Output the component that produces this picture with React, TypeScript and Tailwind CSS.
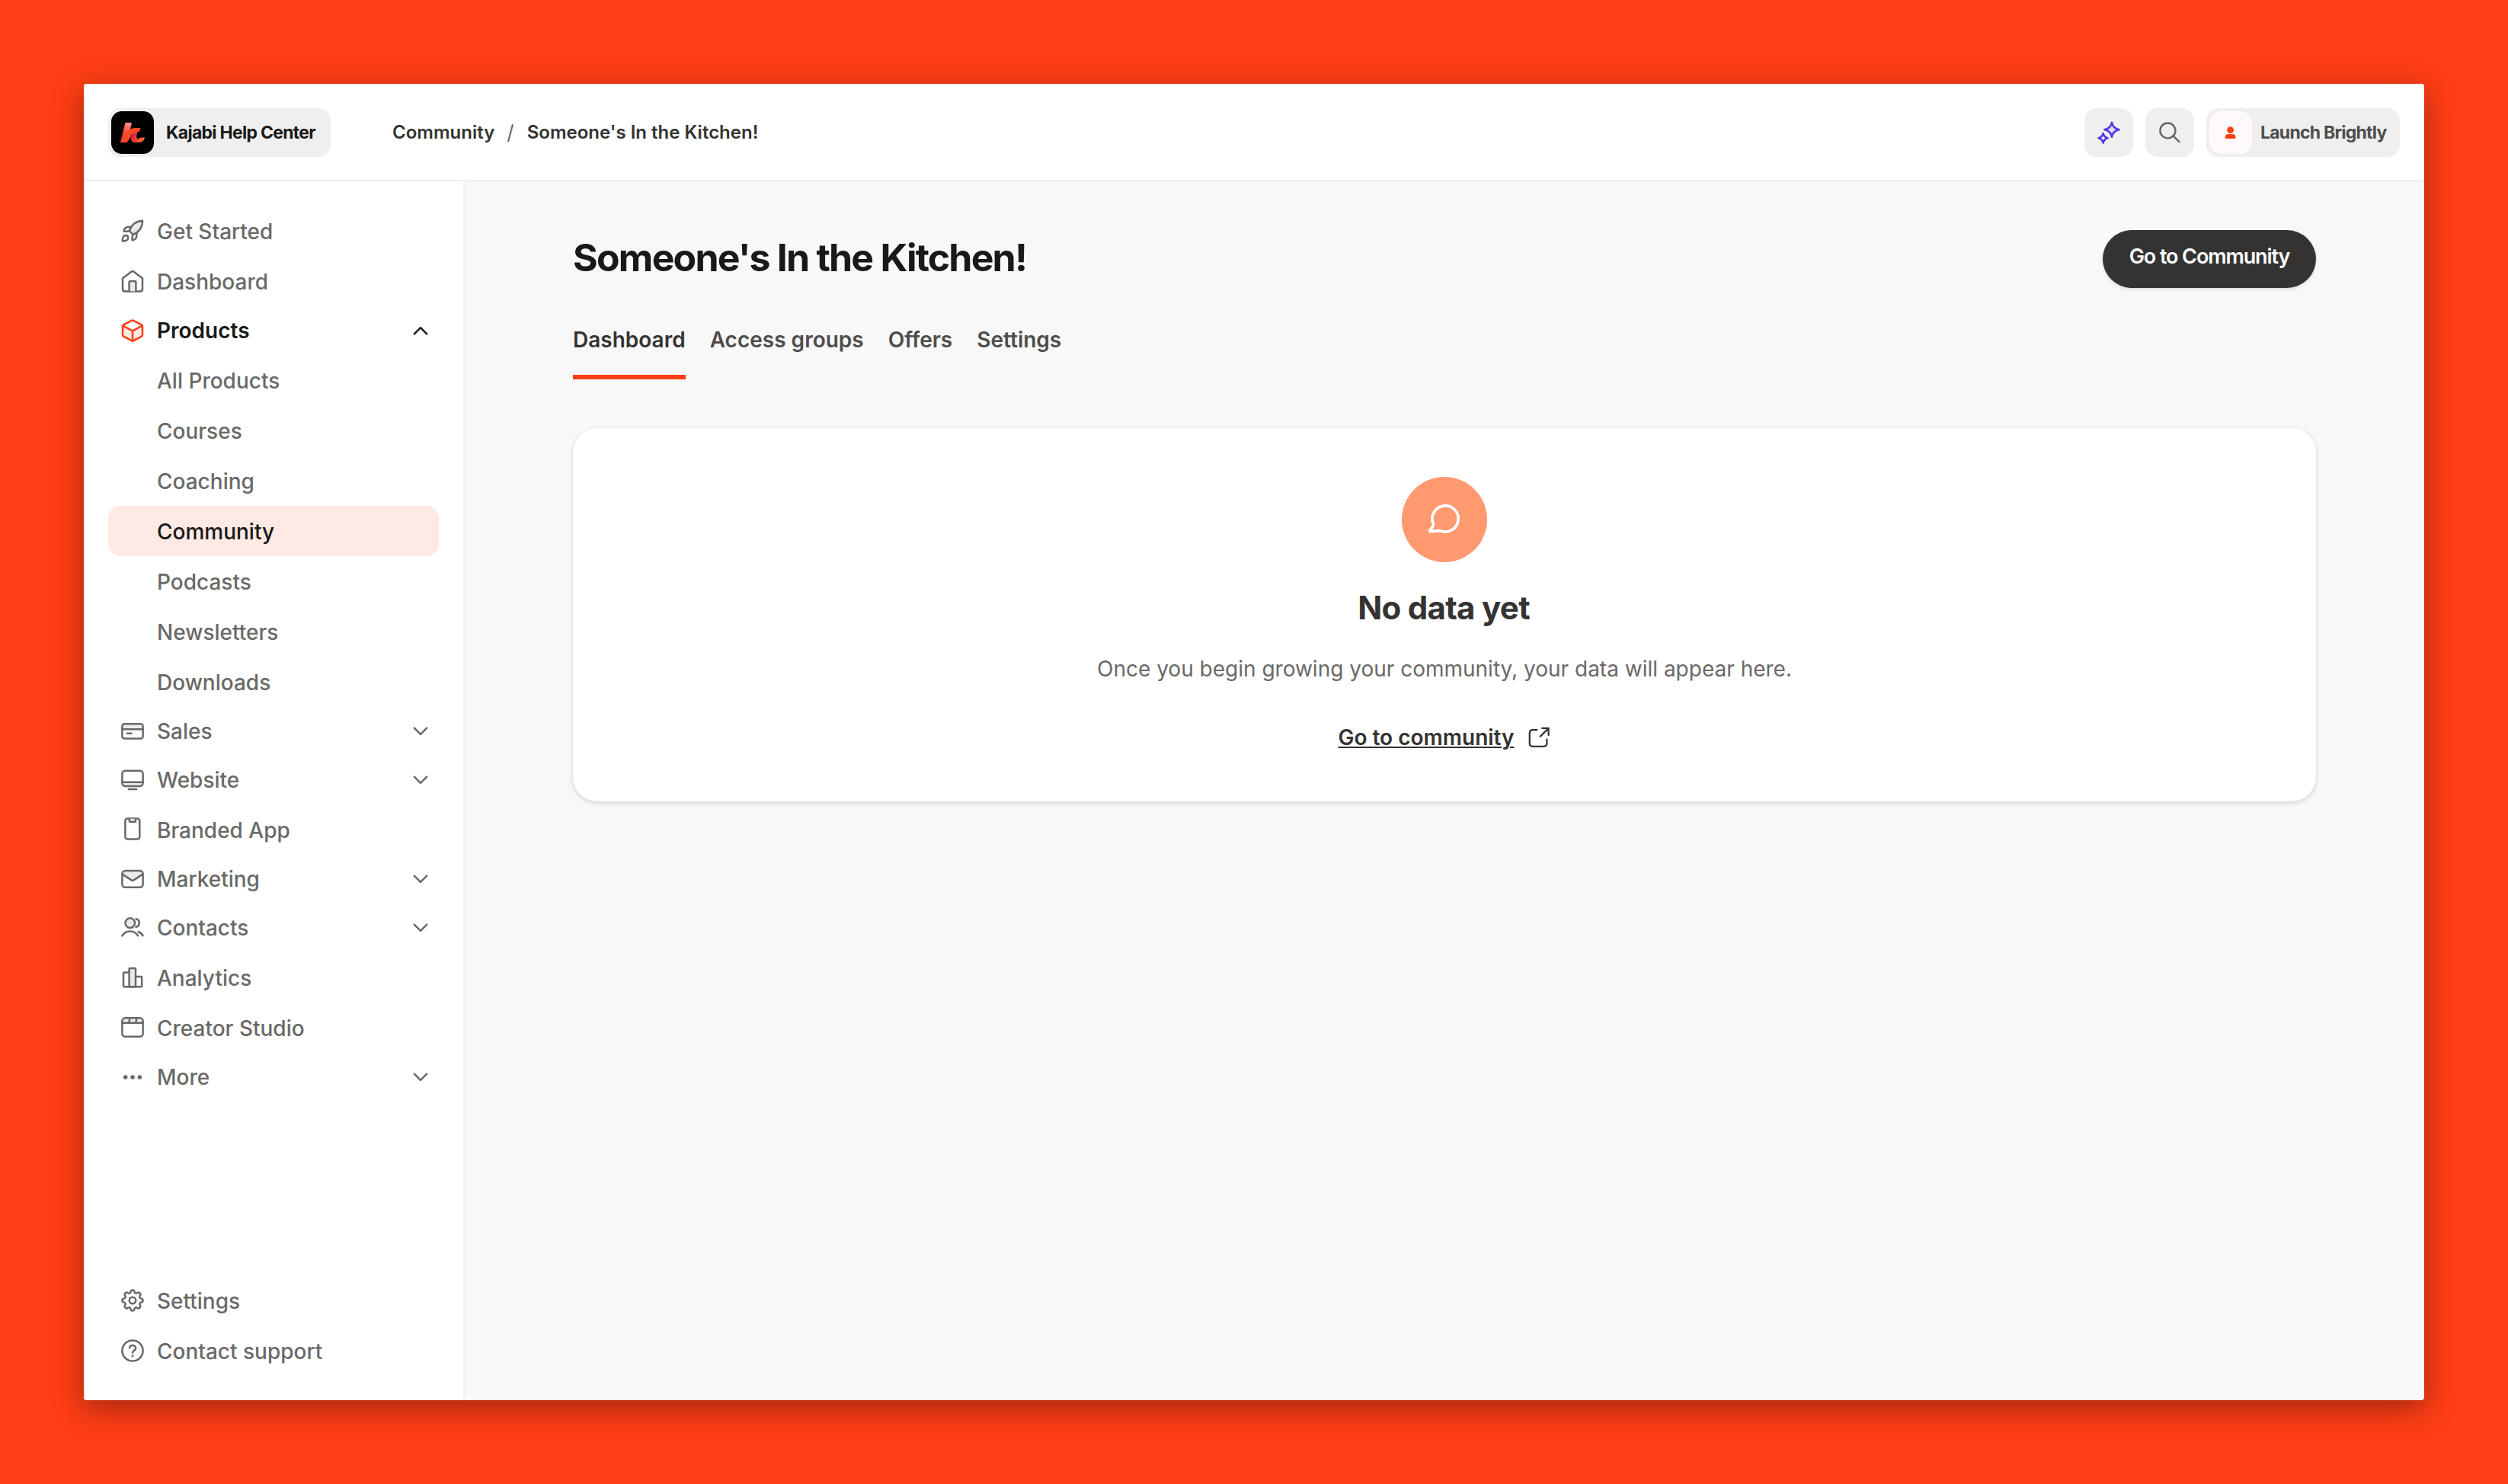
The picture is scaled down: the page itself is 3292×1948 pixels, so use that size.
import type { ReactNode } from "react";

type IconName =
  | "rocket"
  | "home"
  | "box"
  | "card"
  | "monitor"
  | "phone"
  | "mail"
  | "users"
  | "chart"
  | "clapper"
  | "dots"
  | "gear"
  | "help";

interface NavItem {
  label: string;
  icon: IconName;
  children?: string[];
  expandable?: boolean;
}

const mainNav: NavItem[] = [
  { label: "Get Started", icon: "rocket" },
  { label: "Dashboard", icon: "home" },
  {
    label: "Products",
    icon: "box",
    expandable: true,
    children: [
      "All Products",
      "Courses",
      "Coaching",
      "Community",
      "Podcasts",
      "Newsletters",
      "Downloads",
    ],
  },
  { label: "Sales", icon: "card", expandable: true },
  { label: "Website", icon: "monitor", expandable: true },
  { label: "Branded App", icon: "phone" },
  { label: "Marketing", icon: "mail", expandable: true },
  { label: "Contacts", icon: "users", expandable: true },
  { label: "Analytics", icon: "chart" },
  { label: "Creator Studio", icon: "clapper" },
  { label: "More", icon: "dots", expandable: true },
];

const footerNav: NavItem[] = [
  { label: "Settings", icon: "gear" },
  { label: "Contact support", icon: "help" },
];

const tabs = ["Dashboard", "Access groups", "Offers", "Settings"];

// duotone icons on a 32 unit grid, "fill-[#ebebeb]" is the soft tone
const iconShapes: Record<IconName, ReactNode> = {
  rocket: (
    <>
      <path
        className="fill-[#ebebeb]"
        d="M11.8 16.2C14 9 19.5 3.6 29 2.8C29.4 11.5 23.5 18.3 16.6 20.9Z"
      />
      <path d="M13 10.9H10.6C7.6 10.9 5 12.8 4.6 16.6C7.4 17 9.6 16.6 11.8 16.2" />
      <path d="M21.4 18.2V21.6C21.4 25.8 19.4 28 15.6 28.3C15.2 25.4 15.6 23.4 16.4 20.9" />
      <path d="M2.8 29.6C2.8 24.6 4 21.9 7 21.9C8.9 21.9 10.2 23.2 10.2 25.1C10.2 28.4 7.2 29.6 2.8 29.6Z" />
    </>
  ),
  home: (
    <>
      <path d="M3 12.3 14.6 3.5Q16 2.5 17.4 3.5L29 12.3V26.4Q29 29.4 26 29.4H6Q3 29.4 3 26.4Z" />
      <path
        className="fill-[#ebebeb]"
        d="M11.6 29.2V17.6Q11.6 16 13.2 16H18.8Q20.4 16 20.4 17.6V29.2"
      />
    </>
  ),
  box: (
    <>
      <path className="fill-[#ffe9e4]" stroke="none" d="M3 9.8 16 16.4 29 9.8V23L16 29.5 3 23Z" />
      <path d="M14.7 2.8Q16 2.1 17.3 2.8L27.8 8.4Q29 9.1 29 10.4V21.6Q29 22.9 27.8 23.6L17.3 29.2Q16 29.9 14.7 29.2L4.2 23.6Q3 22.9 3 21.6V10.4Q3 9.1 4.2 8.4Z" />
      <path d="M3.4 9.6 16 16.3 28.6 9.6M16 16.3V29.2" />
    </>
  ),
  card: (
    <>
      <path className="fill-[#ebebeb]" stroke="none" d="M2.4 6.5H29.6V13.4H2.4Z" />
      <rect x="2.4" y="6.2" width="27.2" height="19.4" rx="3" />
      <path d="M2.4 13.2H29.6M8.6 18.8H14.6" />
    </>
  ),
  monitor: (
    <>
      <path className="fill-[#ebebeb]" stroke="none" d="M2.4 18.9H29.6V24H2.4Z" />
      <rect x="2.4" y="3.8" width="27.2" height="20.2" rx="4" />
      <path d="M2.4 18.8H29.6M10.8 28H21.2" />
    </>
  ),
  phone: (
    <>
      <rect x="6.4" y="1.6" width="18.9" height="27" rx="3" />
      <path
        className="fill-[#ebebeb]"
        d="M11.8 1.8V4.2Q11.8 5.8 13.4 5.8H18.4Q20 5.8 20 4.2V1.8"
      />
    </>
  ),
  mail: (
    <>
      <path className="fill-[#ebebeb]" stroke="none" d="M3 9V7L6 5H26L29 7V9L16 18Z" />
      <rect x="2.4" y="5" width="27.2" height="21.8" rx="4" />
      <path d="M2.8 9.6 14.6 17.4Q16 18.4 17.4 17.4L29.2 9.6" />
    </>
  ),
  users: (
    <>
      <circle className="fill-[#ebebeb]" cx="12.8" cy="9.6" r="6.3" />
      <path d="M2.4 26.4C4.8 22.4 8.4 20.6 12.6 20.6C17 20.6 20.6 22.6 23 26.2" />
      <path d="M20.6 4.2C23.2 4.8 24.8 6.8 24.8 9.6C24.8 12.2 23 14.4 20.4 14.9" />
      <path d="M23.6 21.2C26.2 22 28.2 23.6 29.6 26.2" />
    </>
  ),
  chart: (
    <>
      <path className="fill-[#ebebeb]" d="M11.6 28.2V5Q11.6 4 12.6 4H19Q20 4 20 5V28.2Z" />
      <path d="M11.6 9.4H5Q4 9.4 4 10.4V27.2Q4 28.2 5 28.2H27.2Q28.2 28.2 28.2 27.2V16Q28.2 15 27.2 15H20" />
    </>
  ),
  clapper: (
    <>
      <path className="fill-[#ebebeb]" stroke="none" d="M3 9.6V6L6 3H26L29 6V9.6Z" />
      <rect x="2.4" y="3.2" width="27.2" height="24.6" rx="4" />
      <path d="M2.4 9.8H29.6M12.4 3.6 11.2 9.4M21.4 3.6 20.2 9.4" />
    </>
  ),
  dots: (
    <g fill="currentColor" stroke="none">
      <circle cx="6.7" cy="16" r="2.8" />
      <circle cx="16" cy="16" r="2.8" />
      <circle cx="25.3" cy="16" r="2.8" />
    </g>
  ),
  gear: (
    <>
      <circle cx="16" cy="16" r="4.3" />
      <path d="M13.6 4.4C14 1.8 18 1.8 18.4 4.4C18.7 6.6 20.6 7.4 22.4 6.1C24.5 4.5 27.4 7.4 25.9 9.6C24.6 11.4 25.4 13.3 27.6 13.6C30.2 14 30.2 18 27.6 18.4C25.4 18.7 24.6 20.6 25.9 22.4C27.4 24.6 24.5 27.5 22.4 25.9C20.6 24.6 18.7 25.4 18.4 27.6C18 30.2 14 30.2 13.6 27.6C13.3 25.4 11.4 24.6 9.6 25.9C7.5 27.5 4.6 24.6 6.1 22.4C7.4 20.6 6.6 18.7 4.4 18.4C1.8 18 1.8 14 4.4 13.6C6.6 13.3 7.4 11.4 6.1 9.6C4.6 7.4 7.5 4.5 9.6 6.1C11.4 7.4 13.3 6.6 13.6 4.4Z" />
    </>
  ),
  help: (
    <>
      <circle cx="16" cy="16" r="13.6" />
      <path d="M12 12.4C12.2 10.4 13.8 9 16 9C18.4 9 20.2 10.6 20.2 12.8C20.2 15.4 16.4 15.8 16 18.6" />
      <circle cx="16" cy="22.8" r="1.6" fill="currentColor" stroke="none" />
    </>
  ),
};

function Icon({ name }: { name: IconName }) {
  return (
    <svg
      width="32"
      height="32"
      viewBox="0 0 32 32"
      fill="none"
      stroke="currentColor"
      strokeWidth="2.5"
      strokeLinecap="round"
      strokeLinejoin="round"
      className="shrink-0"
    >
      {iconShapes[name]}
    </svg>
  );
}

function Chevron({ up }: { up?: boolean }) {
  return (
    <svg
      width="32"
      height="32"
      viewBox="0 0 32 32"
      fill="none"
      stroke="currentColor"
      strokeWidth="2.5"
      strokeLinecap="round"
      strokeLinejoin="round"
      className={up ? "rotate-180" : ""}
    >
      <path d="M7.8 11.6 16 19.8 24.2 11.6" />
    </svg>
  );
}

function NavRow({ item }: { item: NavItem }) {
  const open = !!item.children;
  return (
    <>
      <a
        className={`flex items-center rounded-2xl pl-4 pr-2 ${item.expandable ? "h-16" : "h-[66px]"} ${
          open ? "font-semibold text-[#191918]" : "text-[#696968]"
        }`}
      >
        <span className={`flex ${open ? "text-[#ff3e15]" : ""}`}>
          <Icon name={item.icon} />
        </span>
        <span className={`ml-4 flex-1 ${item.expandable ? "" : "pt-px"}`}>{item.label}</span>
        {item.expandable && <Chevron up={open} />}
      </a>
      {item.children?.map((child) => (
        <a
          key={child}
          className={`flex h-[66px] items-center rounded-2xl pl-16 pt-0.5 ${
            child === "Community" ? "bg-[#ffe9e4] text-[#191918]" : "text-[#696968]"
          }`}
        >
          {child}
        </a>
      ))}
    </>
  );
}

function Logo() {
  return (
    <div className="flex h-14 w-14 rounded-[14px] bg-black">
      <svg width="56" height="56" viewBox="0 0 56 56">
        <defs>
          <linearGradient id="stem" x1="0.6" y1="0" x2="0.3" y2="1">
            <stop offset="0" stopColor="#ff8d8d" />
            <stop offset="0.5" stopColor="#ff4a2a" />
            <stop offset="1" stopColor="#a81c5c" />
          </linearGradient>
          <linearGradient id="leg" x1="0" y1="0.4" x2="1" y2="0.6">
            <stop offset="0" stopColor="#b0205a" />
            <stop offset="0.45" stopColor="#ff4420" />
            <stop offset="1" stopColor="#ff6a50" />
          </linearGradient>
        </defs>
        <path fill="url(#stem)" d="M18.4 15H27L24.4 26 15 41H11.8Z" />
        <path fill="#ff4820" d="M12 41C16 31 23 22 31 22H38.6L36.6 27C29 27.6 25.6 33.4 20.8 41Z" />
        <path
          fill="url(#leg)"
          d="M25.6 30.4 34.4 26C33.2 31.6 32.4 36 35 36C37 36 37.6 34.6 39.4 34.6H44C43.2 38.6 40.6 41 36.6 41H31C26.6 41 25.2 36.8 25.6 30.4Z"
        />
      </svg>
    </div>
  );
}

function Header() {
  return (
    <header className="flex h-32 items-center border-b-2 border-[#efefef] bg-white px-8 pt-0.5">
      <div className="flex h-16 w-[292px] items-center rounded-2xl bg-[#efefef] pl-1">
        <Logo />
        <span className="ml-4 whitespace-nowrap text-[23px] font-bold tracking-[-0.73px] text-[#191918]">
          Kajabi Help Center
        </span>
      </div>
      <nav className="ml-[81px] flex items-center text-2xl font-semibold text-[#343332]">
        <span>Community</span>
        <span className="ml-4 mr-[17px] text-[26px] font-normal leading-8 text-[#696968]">/</span>
        <span>Someone's In the Kitchen!</span>
      </nav>
      <div className="ml-auto flex gap-4">
        <button className="flex h-16 w-16 items-center justify-center rounded-2xl bg-[#efefef] text-[#4f3ae6]">
          <svg
            width="32"
            height="32"
            viewBox="0 0 32 32"
            fill="none"
            stroke="currentColor"
            strokeWidth="2.6"
            strokeLinejoin="round"
          >
            <path
              className="fill-[#dedaf8]"
              d="M20 2.8C20.9 7.8 23.2 10.9 29.6 12.2C23.2 13.5 20.9 16.6 20 21.8C19.1 16.6 16.8 13.5 10.4 12.2C16.8 10.9 19.1 7.8 20 2.8Z"
            />
            <path d="M8.6 17C9.3 20.2 10.9 22.2 14.6 23.2C10.9 24.2 9.3 26.2 8.6 29.6C7.9 26.2 6.3 24.2 2.6 23.2C6.3 22.2 7.9 20.2 8.6 17Z" />
          </svg>
        </button>
        <button className="flex h-16 w-16 items-center justify-center rounded-2xl bg-[#efefef] text-[#696968]">
          <svg
            width="32"
            height="32"
            viewBox="0 0 32 32"
            fill="none"
            stroke="currentColor"
            strokeWidth="2.5"
            strokeLinecap="round"
          >
            <circle cx="13.4" cy="13.4" r="10" />
            <path d="M20.8 20.6 28.4 28.2" />
          </svg>
        </button>
        <div className="flex h-16 w-[254px] items-center rounded-2xl bg-[#efefef] pl-1">
          <div className="flex h-14 w-14 items-center justify-center rounded-2xl bg-[#fffafa] text-[#ff3e15]">
            <svg width="16" height="16" viewBox="0 0 16 16" fill="currentColor">
              <circle cx="7.6" cy="4.6" r="4.4" />
              <path d="M0.6 14.6C0.6 11.4 2.6 10 5.2 10H10C12.6 10 14.6 11.4 14.6 14.6Q14.6 16 13.2 16H2Q0.6 16 0.6 14.6Z" />
            </svg>
          </div>
          <span className="ml-[11px] whitespace-nowrap text-[23px] font-bold tracking-[-0.76px] text-[#4e4d4c]">
            Launch Brightly
          </span>
        </div>
      </div>
    </header>
  );
}

function EmptyState() {
  return (
    <section className="mt-16 flex h-[490px] flex-col items-center rounded-[32px] bg-white pt-16 shadow-[0_2px_6px_rgba(0,0,0,0.16)]">
      <div className="flex h-28 w-28 items-center justify-center rounded-full bg-[#ff9970] text-white">
        <svg
          width="48"
          height="48"
          viewBox="0 0 48 48"
          fill="none"
          stroke="currentColor"
          strokeWidth="3.8"
          strokeLinecap="round"
          strokeLinejoin="round"
        >
          <path d="M9.4 29.8A17.1 17.1 0 1 1 18.6 38.8C14.6 38.4 9.6 39.6 5.6 39.6C4.6 39.6 4.6 38.8 5.2 38C7.4 34.8 10 32.2 9.4 29.8Z" />
        </svg>
      </div>
      <h2 className="mt-8 pr-0.5 text-[42px] font-bold leading-[56px] tracking-[-0.7px] text-[#343332]">
        No data yet
      </h2>
      <p className="mt-8 text-[28px] leading-10 text-[#696968]">
        Once you begin growing your community, your data will appear here.
      </p>
      <a className="mt-[50px] flex items-center gap-4 text-[28px] font-semibold leading-10 text-[#343332]">
        <span className="underline decoration-2 underline-offset-2">Go to community</span>
        <svg
          width="32"
          height="32"
          viewBox="0 0 32 32"
          fill="none"
          stroke="currentColor"
          strokeWidth="2.3"
          strokeLinecap="round"
          strokeLinejoin="round"
        >
          <path d="M13.4 6.2H7.8Q3.8 6.2 3.8 10.2V23.8Q3.8 27.8 7.8 27.8H22.4Q26.4 27.8 26.4 23.8V18.6" />
          <path d="M20.4 3.9H28.6V13M28.2 4.4 17.7 14.8" />
        </svg>
      </a>
    </section>
  );
}

export default function App() {
  return (
    <div className="h-[1948px] w-[3292px] bg-[#ff3e15] p-[110px] font-['Inter','Liberation_Sans',sans-serif]">
      <div className="flex h-[1728px] w-[3072px] flex-col overflow-hidden rounded-[4px] bg-[#f8f8f8] shadow-[0_10px_40px_rgba(0,0,0,0.38)]">
        <Header />
        <div className="flex flex-1">
          <aside className="flex w-[500px] flex-col justify-between border-r-2 border-[#efefef] bg-white p-8 text-[28px] font-medium">
            <nav className="flex flex-col">
              {mainNav.map((item) => (
                <NavRow key={item.label} item={item} />
              ))}
            </nav>
            <nav className="flex flex-col">
              {footerNav.map((item) => (
                <NavRow key={item.label} item={item} />
              ))}
            </nav>
          </aside>
          <main className="flex-1 pl-[142px] pr-[142px] pt-16">
            <div className="flex h-[76px] items-center justify-between">
              <h1 className="pb-[3px] text-[50px] font-bold leading-[73px] tracking-[-1.8px] text-[#191918]">
                Someone's In the Kitchen!
              </h1>
              <button className="flex h-[76px] w-[280px] items-center justify-center rounded-full bg-[#343332] pb-[5px] text-[27px] font-semibold tracking-[-1.1px] text-white shadow-[0_2px_4px_rgba(0,0,0,0.12)]">
                Go to Community
              </button>
            </div>
            <div className="mt-10 flex gap-8 text-[28px] font-semibold text-[#4e4d4c]">
              {tabs.map((tab, i) => (
                <a
                  key={tab}
                  className={`h-20 pt-2 leading-[40px] ${
                    i === 0 ? "border-b-[6px] border-[#ff3e15] text-[#343332]" : ""
                  }`}
                >
                  {tab}
                </a>
              ))}
            </div>
            <EmptyState />
          </main>
        </div>
      </div>
    </div>
  );
}
